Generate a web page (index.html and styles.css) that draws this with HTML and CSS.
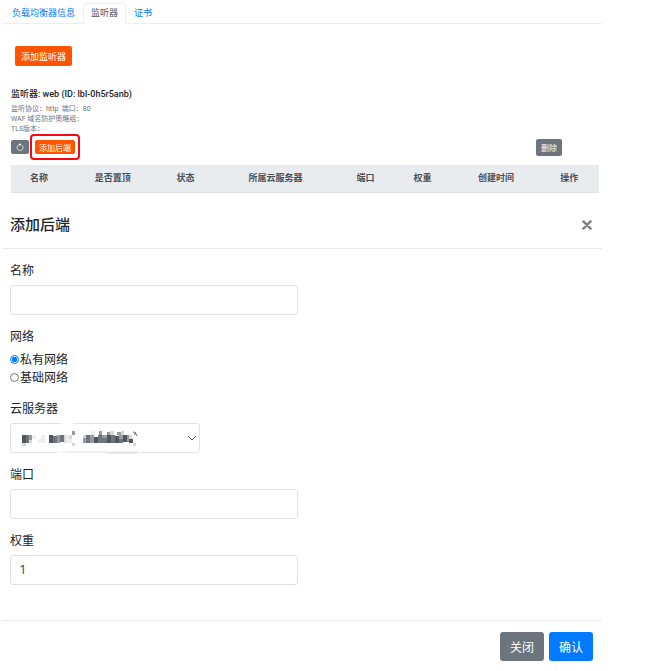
FILE: index.html
```html
<!DOCTYPE html>
<html lang="zh-CN">
<head>
<meta charset="utf-8">
<meta name="viewport" content="width=device-width, initial-scale=1">
<title>监听器</title>
<link rel="stylesheet" href="styles.css">
</head>
<body>
<div class="page">
  <nav class="tabs">
    <a class="tab" href="#info">负载均衡器信息</a>
    <a class="tab tab-active" href="#listener" aria-current="page">监听器</a>
    <a class="tab" href="#cert">证书</a>
  </nav>

  <main class="listener">
    <button class="btn btn-orange btn-add" type="button">添加监听器</button>
    <h2 class="listener-title">监听器: web (ID: lbl-0h5r5anb)</h2>
    <div class="listener-meta">
      <p>监听协议：http&nbsp; 端口：80</p>
      <p>WAF 域名防护策略组：</p>
      <p>TLS版本：</p>
    </div>
    <div class="toolbar">
      <button class="btn btn-gray btn-refresh" type="button" aria-label="刷新">
        <svg class="icon-refresh" viewBox="0 0 16 16" aria-hidden="true">
          <path d="M12.2 4.6A6 6 0 1 1 8 3" fill="none" stroke="currentColor" stroke-width="1.4"/>
          <path d="M7 0 11 3 7 6z" fill="currentColor"/>
        </svg>
      </button>
      <span class="highlight"><button class="btn btn-orange btn-small" type="button">添加后端</button></span>
      <button class="btn btn-gray btn-delete" type="button">删除</button>
    </div>
    <table class="backends">
      <colgroup>
        <col class="col-name"><col class="col-top"><col class="col-state"><col class="col-server">
        <col class="col-port"><col class="col-weight"><col class="col-time"><col class="col-action">
      </colgroup>
      <thead>
        <tr>
          <th>名称</th><th>是否置顶</th><th>状态</th><th>所属云服务器</th>
          <th>端口</th><th>权重</th><th>创建时间</th><th>操作</th>
        </tr>
      </thead>
    </table>
  </main>

  <section class="dialog" role="dialog" aria-labelledby="dialog-title">
    <header class="dialog-head">
      <h1 class="dialog-title" id="dialog-title">添加后端</h1>
      <button class="close" type="button" aria-label="关闭">
        <svg class="icon-close" viewBox="0 0 10 10" aria-hidden="true">
          <path d="M1.4 1.4 8.6 8.6M8.6 1.4 1.4 8.6" stroke="currentColor" stroke-width="2.4" stroke-linecap="round"/>
        </svg>
      </button>
    </header>
    <form class="dialog-form">
      <div class="field">
        <label class="label" for="name">名称</label>
        <input class="control" id="name" type="text">
      </div>
      <fieldset class="field">
        <legend class="label">网络</legend>
        <label class="radio"><input type="radio" name="net" checked>私有网络</label>
        <label class="radio"><input type="radio" name="net">基础网络</label>
      </fieldset>
      <div class="field">
        <label class="label" for="server">云服务器</label>
        <div class="select-wrap">
          <select class="control" id="server"><option></option></select>
          <svg class="masked" viewBox="0 0 190 32" aria-hidden="true">
            <g fill="#fff"><path d="M51 0h12v2H51z"/><path d="M47 28h83v2H47z"/></g>
            <path d="M47 28h83l-4 2H60z" fill="#eceef4"/>
            <path d="M94 29h36l-3 2H98z" fill="#e6e9f1"/>
            <g fill="#50565e">
              <path d="M12 12h4v8h-4zM39 12h4v8h-4zM84 14h4v6h-4zM97 12h4v8h-4zM105 13h4v7h-4zM113 12h4v7h-4zM119 16h4v4h-4z"/>
            </g>
            <g fill="#6f757c">
              <path d="M16 12h3v8h-3zM43 13h4v7h-4zM50 12h4v7h-4zM76 12h4v8h-4zM88 12h4v8h-4zM92 15h5v5h-5zM101 12h4v8h-4zM109 16h4v4h-4z"/>
            </g>
            <g fill="#969ba0">
              <path d="M19 12h3v5h-3zM47 12h3v8h-3zM62 8h3v4h-3zM73 15h3v5h-3zM80 12h4v8h-4zM89 8h3v4h-3zM97 9h3v3h-3zM107 9h4v3h-4zM92 12h5v3h-5zM117 12h2v7h-2zM109 12h4v4h-4z"/>
            </g>
            <g fill="#d5d8db">
              <path d="M12 20h4v3h-4zM19 17h3v3h-3zM54 12h2v8h-2zM62 20h3v3h-3zM59 12h3v4h-3zM73 12h3v3h-3zM100 8h4v4h-4zM111 8h3v4h-3zM123 20h3v3h-3zM119 12h3v4h-3z"/>
            </g>
            <g fill="#eceeef">
              <path d="M22 12h4v4h-4zM28 16h3v4h-3zM31 12h4v8h-4zM56 12h3v8h-3zM59 16h3v4h-3zM81 8h4v4h-4z"/>
            </g>
            <path d="M123 9q2-1 2 3M125 9l2 4" fill="none" stroke="#6f757c"/>
          </svg>
          <svg class="icon-chevron" viewBox="0 0 10 6" aria-hidden="true">
            <path d="M1 1 5 5 9 1" fill="none" stroke="#4b5056" stroke-width="1"/>
          </svg>
        </div>
      </div>
      <div class="field">
        <label class="label" for="port">端口</label>
        <input class="control" id="port" type="text">
      </div>
      <div class="field">
        <label class="label" for="weight">权重</label>
        <input class="control" id="weight" type="text" value="1">
      </div>
    </form>
    <footer class="dialog-foot">
      <button class="btn btn-gray btn-large" type="button">关闭</button>
      <button class="btn btn-blue btn-large" type="button">确认</button>
    </footer>
  </section>
</div>
</body>
</html>
```
FILE: styles.css
```css
* {
  box-sizing: border-box;
}

body {
  margin: 0;
  background: #fff;
  color: #212529;
  font-family: Roboto, "Noto Sans CJK SC", sans-serif;
  font-size: 12px;
  line-height: 18px;
}

h1,
h2,
p {
  margin: 0;
}

.page {
  margin: 3px 46px 0 2px;
}

.tabs {
  display: flex;
  padding-left: 2px;
  border-bottom: 1px solid #eceef0;
}

.tab {
  height: 20px;
  padding: 0 7px;
  border: 1px solid transparent;
  border-bottom: 0;
  color: #007bff;
  font-size: 9px;
  line-height: 19px;
  text-decoration: none;
}

.tab-active {
  margin-bottom: -1px;
  height: 21px;
  border-color: #eceef0;
  border-radius: 3px 3px 0 0;
  background: #fff;
  color: #495057;
}

.listener {
  padding: 22px 3px 0 9px;
}

.btn {
  display: flex;
  align-items: center;
  justify-content: center;
  border: 0;
  border-radius: 2px;
  padding: 0;
  color: #fff;
  font-family: inherit;
}

.btn-orange {
  background: #ff5500;
}

.btn-gray {
  background: #6c757d;
}

.btn-blue {
  background: #007bff;
}

.btn-add {
  height: 20px;
  margin-left: 4px;
  padding: 0 6px;
  font-size: 9px;
}

.listener-title {
  margin-top: 21px;
  font-size: 9px;
  font-weight: 500;
  line-height: 14px;
}

.listener-meta {
  margin-top: 3px;
  color: #6c757d;
  font-size: 7px;
  line-height: 10px;
}

.toolbar {
  display: flex;
  align-items: center;
}

.btn-refresh {
  width: 18px;
  height: 14px;
}

.icon-refresh {
  width: 8px;
  height: 8px;
}

.highlight {
  margin-left: 1px;
  padding: 4px 3px;
  border: 2px solid #f50a14;
  border-radius: 4px;
}

.btn-small {
  height: 14px;
  padding: 0 4px;
  font-size: 8px;
}

.btn-delete {
  height: 17px;
  margin-right: 37px;
  margin-left: auto;
  padding: 0 5px;
  font-size: 8px;
}

.backends {
  width: 100%;
  margin-top: 5px;
  border-collapse: collapse;
  table-layout: fixed;
}

.backends th {
  height: 27px;
  padding: 0;
  border-bottom: 1px solid #dee2e6;
  background: #e9ecef;
  color: #495057;
  font-size: 9px;
  font-weight: 700;
  text-align: center;
}

.col-name { width: 9.5%; }
.col-top { width: 15.6%; }
.col-state { width: 9.2%; }
.col-server { width: 21.4%; }
.col-port { width: 9.2%; }
.col-weight { width: 10.2%; }
.col-time { width: 14.8%; }
.col-action { width: 10.1%; }

.dialog-head {
  display: flex;
  align-items: center;
  justify-content: space-between;
  height: 56px;
  padding: 9px 10px 0 8px;
  border-bottom: 1px solid #e9ecef;
}

.dialog-title {
  font-size: 15px;
  font-weight: 500;
  line-height: 22px;
}

.close {
  display: flex;
  padding: 0;
  border: 0;
  background: none;
  color: #7f7f7f;
}

.icon-close {
  width: 10px;
  height: 10px;
}

.dialog-form {
  padding: 13px 8px 35px;
}

.field {
  display: flex;
  flex-direction: column;
  width: 49.3%;
  min-width: 0;
  margin: 0 0 13px;
  padding: 0;
  border: 0;
}

.field:last-child {
  margin-bottom: 0;
}

.label {
  margin-bottom: 5px;
  padding: 0;
}

.control {
  width: 100%;
  height: 30px;
  padding: 0 9px;
  border: 1px solid #dfe3e7;
  border-radius: 3px;
  background: #fff;
  color: #495057;
  font-family: Inter, "Noto Sans CJK SC", sans-serif;
  font-size: 12px;
}

select.control {
  display: block;
  appearance: none;
}

.radio {
  display: flex;
  align-items: center;
  gap: 1px;
}

.radio input {
  width: 9px;
  height: 9px;
  margin: 0;
  accent-color: #007bff;
}

.select-wrap {
  position: relative;
  width: 66%;
}

.masked {
  position: absolute;
  top: 0;
  left: 0;
  width: 190px;
  height: 32px;
  pointer-events: none;
}

.icon-chevron {
  position: absolute;
  top: 12px;
  right: 3px;
  width: 10px;
  height: 6px;
  pointer-events: none;
}

.dialog-foot {
  display: flex;
  justify-content: flex-end;
  gap: 5px;
  padding: 11px 9px 10px;
  border-top: 1px solid #e9ecef;
}

.btn-large {
  height: 29px;
  padding: 0 10px;
  border-radius: 3px;
  font-size: 12px;
}
```
